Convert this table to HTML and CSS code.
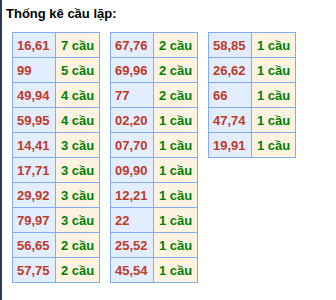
FILE: index.html
```html
<!DOCTYPE html>
<html lang="vi">
<head>
    <meta charset="UTF-8">
    <meta name="viewport" content="width=device-width, initial-scale=1.0">
    <title>Thống kê cầu lặp</title>
    <link rel="stylesheet" href="styles.css">
</head>
<body>
    <div class="page">
        <h3 class="title">Thống kê cầu lặp:</h3>

        <div class="tables">
            <table class="loop-table">
                <tr><td class="pair">16,61</td><td class="count">7 cầu</td></tr>
                <tr><td class="pair">99</td><td class="count">5 cầu</td></tr>
                <tr><td class="pair">49,94</td><td class="count">4 cầu</td></tr>
                <tr><td class="pair">59,95</td><td class="count">4 cầu</td></tr>
                <tr><td class="pair">14,41</td><td class="count">3 cầu</td></tr>
                <tr><td class="pair">17,71</td><td class="count">3 cầu</td></tr>
                <tr><td class="pair">29,92</td><td class="count">3 cầu</td></tr>
                <tr><td class="pair">79,97</td><td class="count">3 cầu</td></tr>
                <tr><td class="pair">56,65</td><td class="count">2 cầu</td></tr>
                <tr><td class="pair">57,75</td><td class="count">2 cầu</td></tr>
            </table>

            <table class="loop-table">
                <tr><td class="pair">67,76</td><td class="count">2 cầu</td></tr>
                <tr><td class="pair">69,96</td><td class="count">2 cầu</td></tr>
                <tr><td class="pair">77</td><td class="count">2 cầu</td></tr>
                <tr><td class="pair">02,20</td><td class="count">1 cầu</td></tr>
                <tr><td class="pair">07,70</td><td class="count">1 cầu</td></tr>
                <tr><td class="pair">09,90</td><td class="count">1 cầu</td></tr>
                <tr><td class="pair">12,21</td><td class="count">1 cầu</td></tr>
                <tr><td class="pair">22</td><td class="count">1 cầu</td></tr>
                <tr><td class="pair">25,52</td><td class="count">1 cầu</td></tr>
                <tr><td class="pair">45,54</td><td class="count">1 cầu</td></tr>
            </table>

            <table class="loop-table">
                <tr><td class="pair">58,85</td><td class="count">1 cầu</td></tr>
                <tr><td class="pair">26,62</td><td class="count">1 cầu</td></tr>
                <tr><td class="pair">66</td><td class="count">1 cầu</td></tr>
                <tr><td class="pair">47,74</td><td class="count">1 cầu</td></tr>
                <tr><td class="pair">19,91</td><td class="count">1 cầu</td></tr>
            </table>
        </div>
    </div>
</body>
</html>
```

FILE: styles.css
```css
body {
    margin: 0;
    padding: 0;
    font-family: "Liberation Sans", Arial, sans-serif;
    background-color: #fff;
    color: #000;
}

.page {
    min-height: 100vh;
    box-sizing: border-box;
    border-left: 2px solid #2c3a56;
    padding: 6px 0 0 4px;
}

.title {
    margin: 0;
    font-size: 13px;
    line-height: 16px;
    font-weight: bold;
}

.tables {
    display: flex;
    align-items: flex-start;
    gap: 10px;
    margin-top: 10px;
    padding-left: 6px;
}

.loop-table {
    border-collapse: collapse;
    width: 88px;
    table-layout: fixed;
}

.loop-table td {
    border: 1px solid #84aaf3;
    height: 25px;
    padding: 0 0 0 5px;
    font-size: 13px;
    font-weight: bold;
    white-space: nowrap;
    box-sizing: border-box;
}

.loop-table .pair {
    width: 43px;
    padding-left: 4px;
    background-color: #e2eefd;
    color: #c0392b;
}

.loop-table .count {
    background-color: #fef3e0;
    color: #008000;
}
```
